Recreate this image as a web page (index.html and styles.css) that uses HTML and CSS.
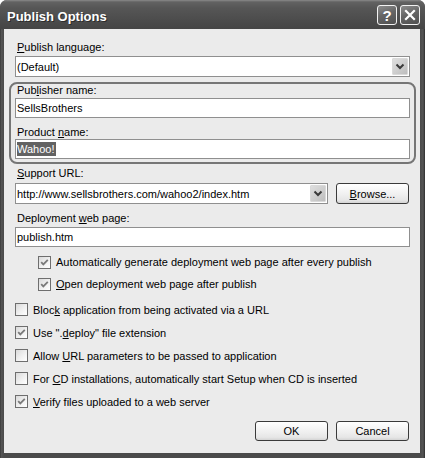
FILE: index.html
```html
<!DOCTYPE html>
<html>
<head>
<meta charset="utf-8">
<title>Publish Options</title>
<link rel="stylesheet" href="styles.css">
</head>
<body>
<div class="window">
  <div class="titlebar">
    <span class="title">Publish Options</span>
    <div class="tb-buttons">
      <span class="tb-btn tb-help">?</span>
      <span class="tb-btn">
        <svg width="12" height="12" viewBox="0 0 12 12"><path d="M2 2 L10 10 M10 2 L2 10" stroke="#fff" stroke-width="2.2" fill="none" stroke-linecap="square"/></svg>
      </span>
    </div>
  </div>
  <div class="client">
    <div class="label l-first"><u>P</u>ublish language:</div>
    <div class="combo combo-full">
      <span class="field-text">(Default)</span>
      <span class="drop"><svg width="16" height="17" viewBox="0 0 16 17"><path d="M4.5 6.5 L8 10 L11.5 6.5" stroke="#3a3a3a" stroke-width="2" fill="none"/></svg></span>
    </div>
    <div class="group">
      <div class="label">Pub<u>l</u>isher name:</div>
      <div class="textbox tb-pub">SellsBrothers</div>
      <div class="label l-product">Product <u>n</u>ame:</div>
      <div class="textbox"><span class="sel">Wahoo!</span></div>
    </div>
    <div class="label l-support"><u>S</u>upport URL:</div>
    <div class="url-row">
      <div class="combo combo-url">
        <span class="field-text">http://www.sellsbrothers.com/wahoo2/index.htm</span>
        <span class="drop"><svg width="16" height="17" viewBox="0 0 16 17"><path d="M4.5 6.5 L8 10 L11.5 6.5" stroke="#3a3a3a" stroke-width="2" fill="none"/></svg></span>
      </div>
      <div class="btn btn-browse"><u>B</u>rowse...</div>
    </div>
    <div class="label l-deploy">Deployment <u>w</u>eb page:</div>
    <div class="textbox tb-deploy">publish.htm</div>

    <div class="check-row indent first-sub">
      <span class="cb checked"><svg width="11" height="11" viewBox="0 0 11 11"><path d="M2.2 5.2 L4.3 7.4 L8.8 2.8" stroke="#7a7a7a" stroke-width="1.8" fill="none"/></svg></span>
      <span>Automatically <u>g</u>enerate deployment web page after every publish</span>
    </div>
    <div class="check-row indent">
      <span class="cb checked"><svg width="11" height="11" viewBox="0 0 11 11"><path d="M2.2 5.2 L4.3 7.4 L8.8 2.8" stroke="#7a7a7a" stroke-width="1.8" fill="none"/></svg></span>
      <span><u>O</u>pen deployment web page after publish</span>
    </div>

    <div class="check-row main first-main">
      <span class="cb"></span>
      <span>Bloc<u>k</u> application from being activated via a URL</span>
    </div>
    <div class="check-row main">
      <span class="cb checked"><svg width="11" height="11" viewBox="0 0 11 11"><path d="M2.2 5.2 L4.3 7.4 L8.8 2.8" stroke="#7a7a7a" stroke-width="1.8" fill="none"/></svg></span>
      <span>Use ".<u>d</u>eploy" file extension</span>
    </div>
    <div class="check-row main">
      <span class="cb"></span>
      <span>Allow <u>U</u>RL parameters to be passed to application</span>
    </div>
    <div class="check-row main">
      <span class="cb"></span>
      <span>For <u>C</u>D installations, automatically start Setup when CD is inserted</span>
    </div>
    <div class="check-row main">
      <span class="cb checked"><svg width="11" height="11" viewBox="0 0 11 11"><path d="M2.2 5.2 L4.3 7.4 L8.8 2.8" stroke="#7a7a7a" stroke-width="1.8" fill="none"/></svg></span>
      <span><u>V</u>erify files uploaded to a web server</span>
    </div>

    <div class="button-row">
      <div class="btn">OK</div>
      <div class="btn">Cancel</div>
    </div>
  </div>
</div>
</body>
</html>
```

FILE: styles.css
```css
* {
  box-sizing: border-box;
}

html,
body {
  margin: 0;
  padding: 0;
  background: #ffffff;
}

body {
  font-family: "Liberation Sans", Arial, sans-serif;
  font-size: 11px;
  color: #000;
}

u {
  text-decoration: underline;
  text-underline-offset: 1px;
}

.window {
  width: 425px;
  height: 458px;
  display: flex;
  flex-direction: column;
  background: linear-gradient(90deg, #2e2e2e 0, #555 1px, #4a4a4a 4px, #4a4a4a 420px, #555 423px, #2e2e2e 425px);
  border-radius: 7px 7px 0 0;
  overflow: hidden;
}

.titlebar {
  height: 29px;
  flex: none;
  display: flex;
  align-items: center;
  padding: 0 5px 0 7px;
  background: linear-gradient(180deg, #8a8a8a 0, #626262 2px, #565656 8px, #4c4c4c 20px, #454545 29px);
}

.title {
  flex: 1;
  font-weight: bold;
  font-size: 13px;
  color: #fff;
  padding-top: 3px;
  text-shadow: 1px 1px 0 #2c2c2c;
}

.tb-buttons {
  display: flex;
  gap: 3px;
  margin-top: 1px;
}

.tb-btn {
  width: 20px;
  height: 20px;
  border: 1px solid #f2f2f2;
  border-radius: 3px;
  display: flex;
  align-items: center;
  justify-content: center;
  background: linear-gradient(160deg, #8c8c8c 0, #666 45%, #505050 100%);
  color: #fff;
  font-weight: bold;
  font-size: 15px;
}

.client {
  flex: 1;
  margin: 0 5px 5px 4px;
  background: #ebebeb;
  padding: 0 10px 0 11px;
  display: flex;
  flex-direction: column;
}

.label {
  height: 13px;
  line-height: 13px;
  padding-left: 2px;
  white-space: nowrap;
}

.l-first {
  margin-top: 12px;
}

.l-product {
  margin-top: 8px;
}

.l-support {
  margin-top: 3px;
}

.l-deploy {
  margin-top: 8px;
}

.combo {
  height: 21px;
  display: flex;
  align-items: center;
  border: 1px solid #8f8f8f;
  background: #fff;
}

.combo-full {
  margin-top: 2px;
}

.combo-url {
  width: 313px;
}

.field-text {
  flex: 1;
  padding-left: 1px;
  white-space: nowrap;
  overflow: hidden;
}

.drop {
  width: 16px;
  height: 17px;
  margin-right: 1px;
  display: flex;
  background: linear-gradient(135deg, #dedede 0, #cfcfcf 50%, #bdbdbd 100%);
  border: 1px solid #d9d9d9;
  border-radius: 1px;
}

.drop svg {
  margin: -1px;
}

.group {
  margin: 5px -6px 0 -6px;
  border: 2px solid #767676;
  border-radius: 8px;
  padding: 0 4px 3px 4px;
}

.textbox {
  height: 20px;
  border: 1px solid #8f8f8f;
  background: #fff;
  padding-left: 1px;
  display: flex;
  align-items: center;
  white-space: nowrap;
}

.tb-pub {
  margin-top: 1px;
}

.tb-deploy {
  margin-top: 2px;
}

.sel {
  background: #626262;
  color: #fff;
  line-height: 14px;
  padding: 0 1px 0 0;
}

.url-row {
  margin-top: 3px;
  height: 21px;
  display: flex;
}

.btn {
  width: 73px;
  height: 21px;
  border: 1px solid #3a3a3a;
  border-radius: 3px;
  background: linear-gradient(180deg, #ffffff 0, #f4f4f4 40%, #e6e6e6 85%, #d4d4d4 100%);
  display: flex;
  align-items: center;
  justify-content: center;
}

.btn-browse {
  margin-left: 8px;
}

.check-row {
  display: flex;
  align-items: center;
  white-space: nowrap;
}

.check-row.indent {
  height: 22px;
  padding-left: 23px;
}

.check-row.main {
  height: 23px;
}

.first-sub {
  margin-top: 4px;
}

.first-main {
  margin-top: 3px;
}

.cb {
  width: 13px;
  height: 13px;
  flex: none;
  margin-right: 5px;
  border: 1px solid #6e6e6e;
  background: linear-gradient(135deg, #dadada 0, #f2f2f2 60%, #ffffff 100%);
  display: flex;
}

.button-row {
  margin-top: 8px;
  display: flex;
  justify-content: flex-end;
  gap: 8px;
  padding-right: 1px;
}

.button-row .btn {
  height: 20px;
}
```
